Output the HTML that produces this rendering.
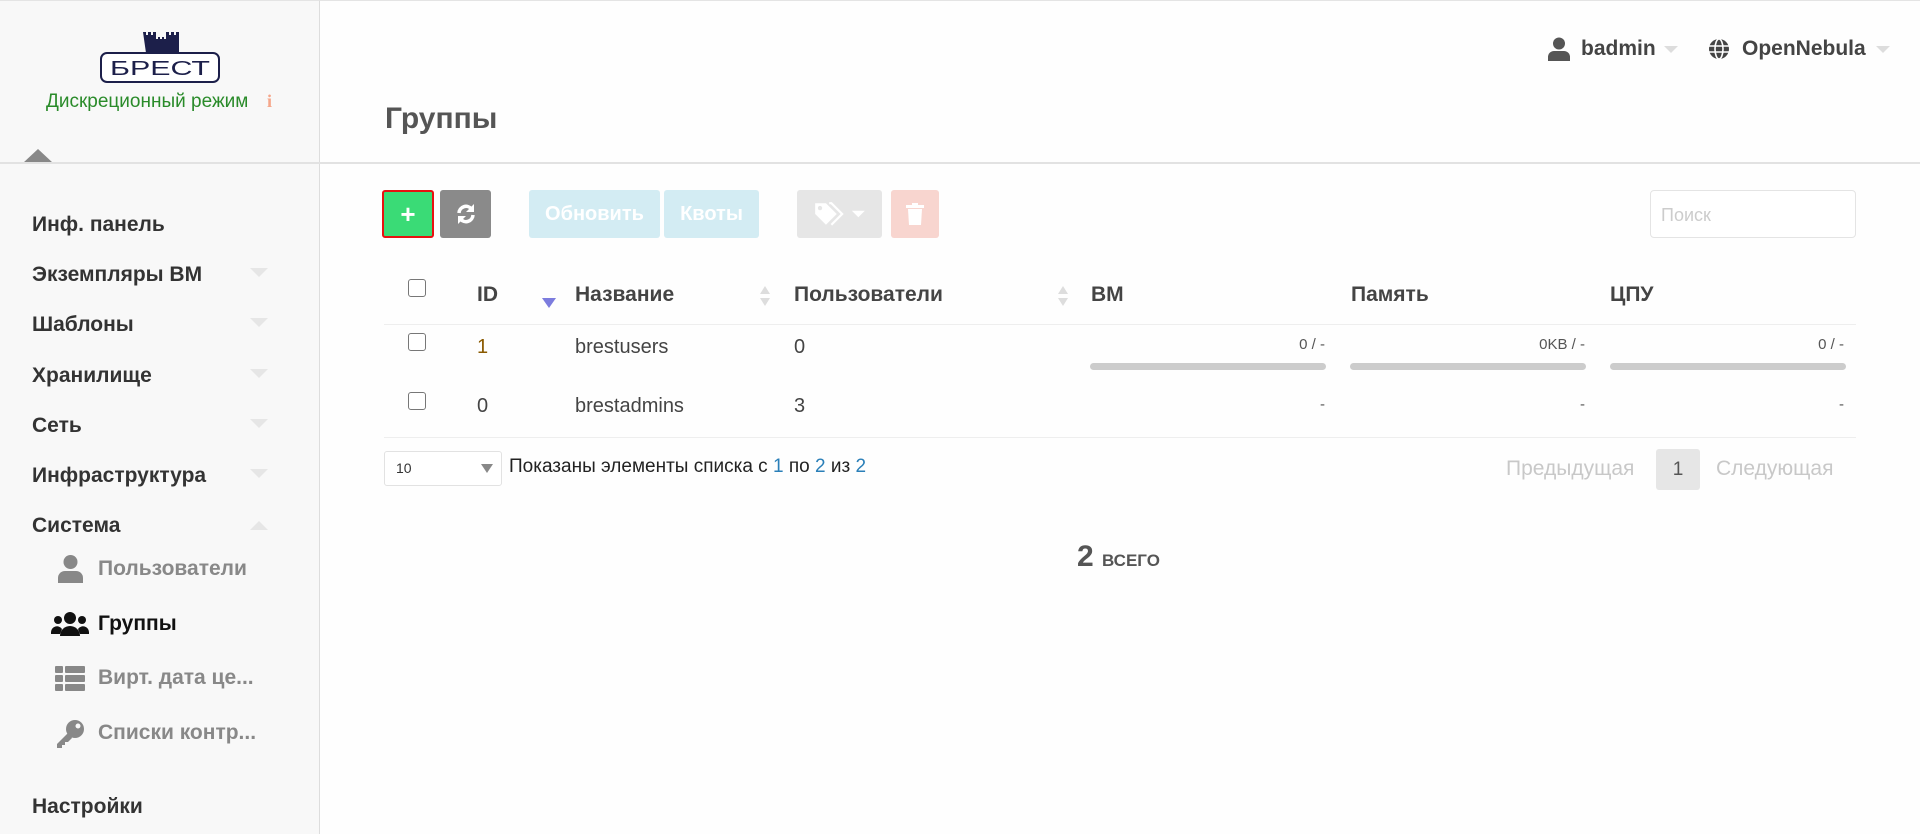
<!DOCTYPE html>
<html><head><meta charset="utf-8"><style>
*{box-sizing:border-box;margin:0;padding:0}
body{width:1920px;height:834px;position:relative;background:#fefefe;font-family:"Liberation Sans",sans-serif;overflow:hidden;color:#333}
.abs{position:absolute;white-space:nowrap}
#side{position:absolute;left:0;top:0;width:320px;height:834px;background:#f8f8f8;border-right:1px solid #ddd;border-top:1px solid #e4e4e4}
.mi{position:absolute;left:32px;font-size:21px;font-weight:bold;color:#333;line-height:24px}
.car{position:absolute;left:250px;width:0;height:0;border-left:9px solid transparent;border-right:9px solid transparent;border-top:9px solid #e6e6e6}
.sub{position:absolute;left:98px;font-size:21px;font-weight:bold;color:#888;line-height:24px}
.btn{position:absolute;top:190px;height:48px;border-radius:3px;color:#fff;font-weight:bold;font-size:20px;display:flex;align-items:center;justify-content:center}
.th{position:absolute;top:283px;font-size:21px;font-weight:bold;color:#444}
.td{position:absolute;font-size:20px;color:#444}
.cb{position:absolute;left:408px;width:18px;height:18px;border:1.5px solid #777;border-radius:3px;background:#fff}
.bar{position:absolute;top:363px;height:7px;background:#ccc;border-radius:4px;width:236px}
.rt{position:absolute;font-size:15px;color:#555;text-align:right;width:236px}
.hl{position:absolute;left:384px;width:1472px;height:1px;background:#eee}
</style></head><body>
<div class="abs" style="left:0;top:0;width:1920px;height:1px;background:#e4e4e4"></div>
<div id="side">
 <svg class="abs" style="left:98px;top:28px" width="124" height="56" viewBox="98 28 124 56">
  <path d="M143 31h3v3h2v-3h3v3h2v-3h3v7h2v-2h2v2h2v-2h2v2h2v-7h3v3h2v-3h3v3h2v-3h3v21h-33z" fill="#1c1f4a"/>
  <rect x="101" y="52" width="118" height="29" rx="6" fill="#fff" stroke="#1c1f4a" stroke-width="2"/>
  <text x="160" y="74" text-anchor="middle" font-family="Liberation Sans" font-size="20" fill="#1c1f4a" textLength="100" lengthAdjust="spacingAndGlyphs">БРЕСТ</text>
 </svg>
 <div class="abs" style="left:46px;top:90px;font-size:19px;color:#2a8b2a">Дискреционный режим</div>
 <div class="abs" style="left:267px;top:90px;font-size:18px;color:#f5a68a;font-weight:bold;font-family:'Liberation Serif',serif">i</div>
 <div class="abs" style="left:23px;top:148px;width:0;height:0;border-left:15px solid transparent;border-right:15px solid transparent;border-bottom:14px solid #888"></div>
 <div class="mi" style="top:212px">Инф. панель</div>
 <div class="mi" style="top:262px">Экземпляры ВМ</div><div class="car" style="top:267px"></div>
 <div class="mi" style="top:312px">Шаблоны</div><div class="car" style="top:317px"></div>
 <div class="mi" style="top:363px">Хранилище</div><div class="car" style="top:368px"></div>
 <div class="mi" style="top:413px">Сеть</div><div class="car" style="top:418px"></div>
 <div class="mi" style="top:463px">Инфраструктура</div><div class="car" style="top:468px"></div>
 <div class="mi" style="top:513px">Система</div>
 <div class="abs" style="left:250px;top:520px;border-left:9px solid transparent;border-right:9px solid transparent;border-bottom:9px solid #e6e6e6"></div>
 <svg class="abs" style="left:57px;top:553px" width="27" height="30" viewBox="0 0 27 30"><circle cx="13.5" cy="8" r="7" fill="#888"/><path d="M1 29v-5a7 7 0 0 1 7-7h11a7 7 0 0 1 7 7v5z" fill="#888"/></svg>
 <div class="sub" style="top:556px">Пользователи</div>
 <svg class="abs" style="left:51px;top:610px" width="38" height="26" viewBox="0 0 38 26"><circle cx="19" cy="7" r="6" fill="#111"/><path d="M9 25a10 10 0 0 1 20 0z" fill="#111"/><circle cx="7" cy="9" r="4" fill="#111"/><circle cx="31" cy="9" r="4" fill="#111"/><path d="M0 21a6 6 0 0 1 11-3l-2 5H0z M38 21a6 6 0 0 0-11-3l2 5h9z" fill="#111"/></svg>
 <div class="sub" style="top:611px;color:#111">Группы</div>
 <svg class="abs" style="left:55px;top:665px" width="30" height="26" viewBox="0 0 30 26"><g fill="#888"><rect x="0" y="0" width="8" height="7" rx="1"/><rect x="10" y="0" width="20" height="7" rx="1"/><rect x="0" y="9" width="8" height="7" rx="1"/><rect x="10" y="9" width="20" height="7" rx="1"/><rect x="0" y="18" width="8" height="7" rx="1"/><rect x="10" y="18" width="20" height="7" rx="1"/></g></svg>
 <div class="sub" style="top:665px">Вирт. дата це...</div>
 <svg class="abs" style="left:55px;top:718px" width="30" height="30" viewBox="0 0 30 30"><circle cx="20" cy="10" r="9" fill="#888"/><circle cx="23" cy="7" r="2.5" fill="#f8f8f8"/><path d="M14 13L2 25v4h5v-3h3v-3h3l4-4z" fill="#888"/></svg>
 <div class="sub" style="top:720px">Списки контр...</div>
 <div class="mi" style="top:794px">Настройки</div>
</div>
<div class="abs" style="left:0;top:162px;width:1920px;height:2px;background:#e2e2e2"></div>

<svg class="abs" style="left:1548px;top:37px" width="22" height="24" viewBox="0 0 22 24"><circle cx="11" cy="6.5" r="6" fill="#555"/><path d="M0 24v-4a6 6 0 0 1 6-6h10a6 6 0 0 1 6 6v4z" fill="#555"/></svg>
<div class="abs" style="left:1581px;top:37px;font-size:21px;font-weight:bold;color:#444">badmin</div>
<div class="abs" style="left:1664px;top:46px;border-left:7px solid transparent;border-right:7px solid transparent;border-top:7px solid #ddd"></div>
<svg class="abs" style="left:1708px;top:38px" width="22" height="22" viewBox="0 0 22 22"><circle cx="11" cy="11" r="10" fill="#444"/><g stroke="#fff" stroke-width="1.6" fill="none"><ellipse cx="11" cy="11" rx="4" ry="10"/><path d="M1 8h20M1 14h20"/></g></svg>
<div class="abs" style="left:1742px;top:37px;font-size:21px;font-weight:bold;color:#444">OpenNebula</div>
<div class="abs" style="left:1876px;top:46px;border-left:7px solid transparent;border-right:7px solid transparent;border-top:7px solid #ddd"></div>

<div class="abs" style="left:385px;top:102px;font-size:30px;font-weight:bold;color:#555">Группы</div>

<div class="btn" style="left:382px;width:52px;background:#3adb76;border:2px solid #e81010;font-size:26px">+</div>
<div class="btn" style="left:440px;width:51px;background:#8a8a8a">
 <svg width="22" height="22" viewBox="0 0 22 22"><g fill="none" stroke="#fff" stroke-width="3.5"><path d="M4 10a7 7 0 0 1 12.5-4"/><path d="M18 12a7 7 0 0 1-12.5 4"/></g><path d="M19 1v8h-8z M3 21v-8h8z" fill="#fff"/></svg></div>
<div class="btn" style="left:529px;width:131px;background:#d3ecf3">Обновить</div>
<div class="btn" style="left:664px;width:95px;background:#d3ecf3">Квоты</div>
<div class="btn" style="left:797px;width:85px;background:#e6e6e6">
 <svg width="54" height="26" viewBox="0 0 50 24"><path d="M2 2h10l10 10-10 10L2 12z" fill="#fff"/><circle cx="6.5" cy="6.5" r="2" fill="#e6e6e6"/><path d="M15 2h2l10 10-10 10" fill="none" stroke="#fff" stroke-width="2"/><path d="M36 9h12l-6 6z" fill="#fff"/></svg></div>
<div class="btn" style="left:891px;width:48px;background:#f8d5cf">
 <svg width="18" height="22" viewBox="0 0 18 22"><rect x="0" y="2" width="18" height="3" fill="#fff"/><rect x="6" y="0" width="6" height="3" fill="#fff"/><path d="M2 6h14l-1 16H3z" fill="#fff"/></svg></div>

<div class="abs" style="left:1650px;top:190px;width:206px;height:48px;border:1px solid #e4e4e4;border-radius:4px;background:#fff"></div>
<div class="abs" style="left:1661px;top:205px;font-size:18px;color:#ccc">Поиск</div>

<div class="cb" style="top:279px"></div>
<div class="th" style="left:477px">ID</div>
<div class="abs" style="left:542px;top:298px;border-left:7px solid transparent;border-right:7px solid transparent;border-top:10px solid #7c7cde"></div>
<div class="th" style="left:575px">Название</div>
<svg class="abs" style="left:759px;top:285px" width="12" height="22"><path d="M6 1l5 8H1z M6 21l5-8H1z" fill="#ddd"/></svg>
<div class="th" style="left:794px">Пользователи</div>
<svg class="abs" style="left:1057px;top:285px" width="12" height="22"><path d="M6 1l5 8H1z M6 21l5-8H1z" fill="#ddd"/></svg>
<div class="th" style="left:1091px">ВМ</div>
<div class="th" style="left:1351px">Память</div>
<div class="th" style="left:1610px">ЦПУ</div>
<div class="hl" style="top:324px"></div>

<div class="cb" style="top:333px"></div>
<div class="td" style="left:477px;top:336px;color:#8a5a00">1</div>
<div class="td" style="left:575px;top:336px">brestusers</div>
<div class="td" style="left:794px;top:336px">0</div>
<div class="rt" style="left:1089px;top:336px">0 / -</div>
<div class="rt" style="left:1349px;top:336px">0KB / -</div>
<div class="rt" style="left:1608px;top:336px">0 / -</div>
<div class="bar" style="left:1090px"></div>
<div class="bar" style="left:1350px"></div>
<div class="bar" style="left:1610px"></div>

<div class="cb" style="top:392px"></div>
<div class="td" style="left:477px;top:395px">0</div>
<div class="td" style="left:575px;top:395px">brestadmins</div>
<div class="td" style="left:794px;top:395px">3</div>
<div class="rt" style="left:1089px;top:396px">-</div>
<div class="rt" style="left:1349px;top:396px">-</div>
<div class="rt" style="left:1608px;top:396px">-</div>
<div class="hl" style="top:437px"></div>

<div class="abs" style="left:384px;top:451px;width:118px;height:35px;border:1px solid #e2e2e2;border-radius:3px;background:#fff"></div>
<div class="abs" style="left:396px;top:460px;font-size:14px;color:#333">10</div>
<div class="abs" style="left:481px;top:464px;border-left:6px solid transparent;border-right:6px solid transparent;border-top:9px solid #888"></div>
<div class="abs" style="left:509px;top:456px;font-size:19px;color:#222">Показаны элементы списка с <span style="color:#2a7fb8">1</span> по <span style="color:#2a7fb8">2</span> из <span style="color:#2a7fb8">2</span></div>

<div class="abs" style="left:1506px;top:457px;font-size:21px;color:#c8c8c8">Предыдущая</div>
<div class="abs" style="left:1656px;top:449px;width:44px;height:41px;background:#e6e6e6;border-radius:3px;font-size:19px;color:#555;text-align:center;line-height:41px">1</div>
<div class="abs" style="left:1716px;top:457px;font-size:21px;color:#c8c8c8">Следующая</div>

<div class="abs" style="left:1077px;top:540px;font-size:30px;font-weight:bold;color:#555">2 <span style="font-size:17px">ВСЕГО</span></div>
</body></html>
